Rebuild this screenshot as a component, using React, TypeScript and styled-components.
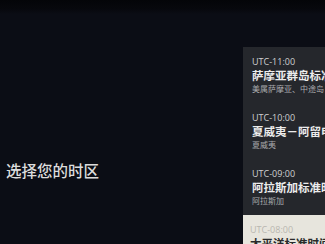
import React from "react";
import styled, { createGlobalStyle } from "styled-components";

const Global = createGlobalStyle`
  html, body { margin: 0; padding: 0; background: #0a0c13; }
  body { font-family: "Noto Sans", "Noto Sans CJK SC", sans-serif; }
`;

const Screen = styled.div`
  width: 325px;
  height: 244px;
  overflow: hidden;
  display: flex;
  align-items: flex-start;
  background: linear-gradient(180deg, #040508 0px, #07080d 9px, #0b0d15 14px, #0b0d15 100%);
`;

const LeftPane = styled.div`
  width: 243px;
  flex-shrink: 0;
  padding: 160px 0 0 6px;
  box-sizing: border-box;
`;

const Title = styled.h1`
  margin: 0;
  font-family: "Noto Sans CJK SC", sans-serif;
  font-weight: 500;
  font-size: 15.5px;
  line-height: 20px;
  color: #dcdcdc;
`;

const Panel = styled.div`
  width: 120px;
  flex-shrink: 0;
  margin-top: 47px;
  background: #25272c;
  display: flex;
  flex-direction: column;
`;

const Item = styled.div<{ $selected?: boolean }>`
  height: 56px;
  flex-shrink: 0;
  box-sizing: border-box;
  padding: 9px 0 0 ${(p) => (p.$selected ? 7 : 9)}px;
  background: ${(p) => (p.$selected ? "#e7e5dd" : "transparent")};
  white-space: nowrap;
`;

const Offset = styled.div<{ $selected?: boolean }>`
  font-family: "Open Sans", "Noto Sans", sans-serif;
  font-size: 9px;
  line-height: 12px;
  color: ${(p) => (p.$selected ? "#b9b7b0" : "#cfd0d2")};
`;

const Zone = styled.div<{ $selected?: boolean }>`
  font-family: "Noto Sans CJK SC", sans-serif;
  font-weight: 700;
  font-size: 11.5px;
  line-height: 15px;
  color: ${(p) => (p.$selected ? "#2a2a2a" : "#ececec")};
`;

const Places = styled.div`
  font-family: "Noto Sans CJK SC", sans-serif;
  font-size: 8px;
  line-height: 11px;
  color: #a9aaac;
`;

const zones = [
  { offset: "UTC-11:00", name: "萨摩亚群岛标准时间", places: "美属萨摩亚、中途岛" },
  { offset: "UTC-10:00", name: "夏威夷－阿留申标准时间", places: "夏威夷" },
  { offset: "UTC-09:00", name: "阿拉斯加标准时间", places: "阿拉斯加" },
  { offset: "UTC-08:00", name: "太平洋标准时间", places: "洛杉矶", selected: true },
];

export default function App() {
  return (
    <>
      <Global />
      <Screen>
        <LeftPane>
          <Title>选择您的时区</Title>
        </LeftPane>
        <Panel>
          {zones.map((z) => (
            <Item key={z.offset} $selected={z.selected}>
              <Offset $selected={z.selected}>{z.offset}</Offset>
              <Zone $selected={z.selected}>{z.name}</Zone>
              <Places>{z.places}</Places>
            </Item>
          ))}
        </Panel>
      </Screen>
    </>
  );
}
